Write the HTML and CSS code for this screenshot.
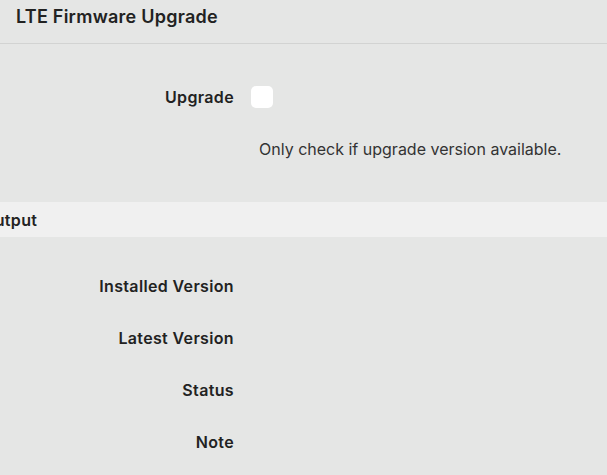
FILE: index.html
```html
<!DOCTYPE html>
<html>
<head>
<meta charset="utf-8">
<link rel="stylesheet" href="styles.css">
</head>
<body>
<div class="header"><h1 class="title">LTE Firmware Upgrade</h1></div>
<div class="section first">
  <div class="row">
    <div class="label">Upgrade</div>
    <div class="field"><span class="checkbox"></span></div>
  </div>
  <div class="row">
    <div class="label"></div>
    <div class="field desc">Only check if upgrade version available.</div>
  </div>
</div>
<div class="bar"><span class="bar-title">Output</span></div>
<div class="section">
  <div class="row"><div class="label">Installed Version</div><div class="field"></div></div>
  <div class="row"><div class="label">Latest Version</div><div class="field"></div></div>
  <div class="row"><div class="label">Status</div><div class="field"></div></div>
  <div class="row"><div class="label">Note</div><div class="field"></div></div>
</div>
</body>
</html>
```
FILE: styles.css
```css
html, body {
  margin: 0;
  padding: 0;
  background: #e5e6e5;
  font-family: Inter, "Open Sans", sans-serif;
  color: #222;
  overflow: hidden;
}
.header {
  padding: 6px 16px 15px;
  border-bottom: 1px solid #d2d3d2;
}
.title {
  margin: 0;
  font-size: 18px;
  line-height: 22px;
  font-weight: 600;
  letter-spacing: 0.25px;
  color: #222;
}
.section {
  display: flex;
  flex-direction: column;
}
.section.first {
  padding: 27px 0 27px;
}
.bar + .section {
  padding-top: 23px;
}
.row {
  display: flex;
  align-items: center;
  height: 52px;
  gap: 17px;
}
.label {
  width: 234px;
  flex: none;
  text-align: right;
  font-size: 16px;
  font-weight: 600;
  letter-spacing: 0.35px;
  color: #222;
}
.field {
  flex: 1;
  display: flex;
  align-items: center;
}
.checkbox {
  width: 22px;
  height: 22px;
  background: #fff;
  border-radius: 5px;
}
.desc {
  padding-left: 8px;
  font-size: 16px;
  color: #333;
  font-weight: 400;
}
.bar {
  height: 35px;
  background: #f0f0f0;
  display: flex;
  align-items: center;
}
.bar-title {
  margin-left: -18px;
  font-size: 16px;
  font-weight: 600;
  letter-spacing: 0.35px;
  color: #222;
}
```
